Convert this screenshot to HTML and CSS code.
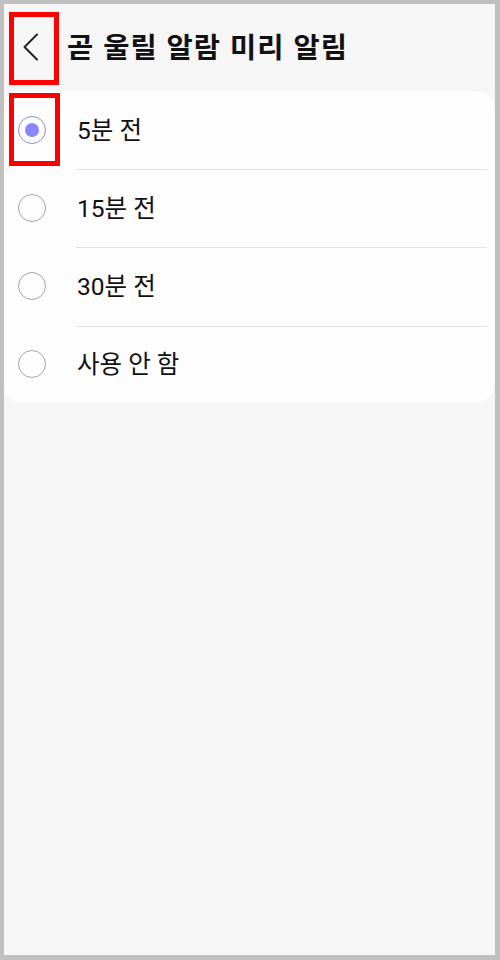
FILE: index.html
```html
<!DOCTYPE html>
<html lang="ko">
<head>
<meta charset="utf-8">
<link rel="stylesheet" href="styles.css">
</head>
<body>
<div class="screen">
  <header class="header">
    <button class="back" aria-label="뒤로">
      <svg width="16" height="28" viewBox="0 0 16 28"><path d="M14 1.5 L1.5 14 L14 26.5" fill="none" stroke="#222" stroke-width="2" stroke-linecap="round" stroke-linejoin="round"/></svg>
    </button>
    <h1 class="title">곧 울릴 알람 미리 알림</h1>
  </header>
  <ul class="card">
    <li class="row"><span class="radio on"></span><span class="label">5분 전</span></li>
    <li class="row"><span class="radio"></span><span class="label">15분 전</span></li>
    <li class="row row-tall"><span class="radio"></span><span class="label">30분 전</span></li>
    <li class="row row-last"><span class="radio"></span><span class="label">사용 안 함</span></li>
  </ul>
  <div class="mark mark-back"></div>
  <div class="mark mark-radio"></div>
</div>
</body>
</html>
```
FILE: styles.css
```css
* { box-sizing: border-box; }
html, body { margin: 0; padding: 0; }
body {
  width: 500px;
  height: 960px;
  background: #c0c0c0;
  font-family: "Noto Sans CJK KR", "Noto Sans", sans-serif;
}
.screen {
  position: relative;
  width: 500px;
  height: 960px;
  border-style: solid;
  border-color: #c0c0c0;
  border-width: 4px 5px 5px 4px;
  background: #f6f6f6;
  display: flex;
  flex-direction: column;
}
.header {
  height: 87px;
  display: flex;
  align-items: center;
  padding-left: 19px;
}
.back {
  border: 0;
  background: none;
  padding: 0;
  width: 16px;
  height: 28px;
  margin-top: -2px;
  display: flex;
}
.title {
  margin: -2px 0 0 28px;
  font-size: 28.5px;
  letter-spacing: 1px;
  font-weight: 700;
  color: #111;
  line-height: 1;
}
.card {
  list-style: none;
  margin: 0 1px 0 0;
  padding: 0;
  background: #fdfdfd;
  border-radius: 16px;
}
.row {
  height: 78px;
  display: flex;
  align-items: center;
  position: relative;
}
.row + .row::before {
  content: "";
  position: absolute;
  top: 0;
  left: 72px;
  right: 7px;
  height: 1px;
  background: #e3e3e3;
}
.row-tall { height: 79px; }
.row-last { height: 76px; }
.radio {
  width: 28px;
  height: 28px;
  border-radius: 50%;
  border: 1.5px solid #a4a4a4;
  margin-left: 14px;
  margin-top: -1px;
  display: flex;
  align-items: center;
  justify-content: center;
}
.radio.on { border-color: #8d8de0; }
.radio.on::after {
  content: "";
  width: 14px;
  height: 14px;
  border-radius: 50%;
  background: #8888fa;
}
.label {
  margin-left: 31px;
  margin-top: 2px;
  font-family: Roboto, "Noto Sans CJK KR", sans-serif;
  font-size: 24.5px;
  color: #111;
  line-height: 1;
}
.mark {
  position: absolute;
  border: 5px solid #ff0000;
}
.mark-back { left: 5px; top: 8px; width: 50px; height: 73px; }
.mark-radio { left: 5px; top: 89px; width: 51px; height: 73px; }
```
